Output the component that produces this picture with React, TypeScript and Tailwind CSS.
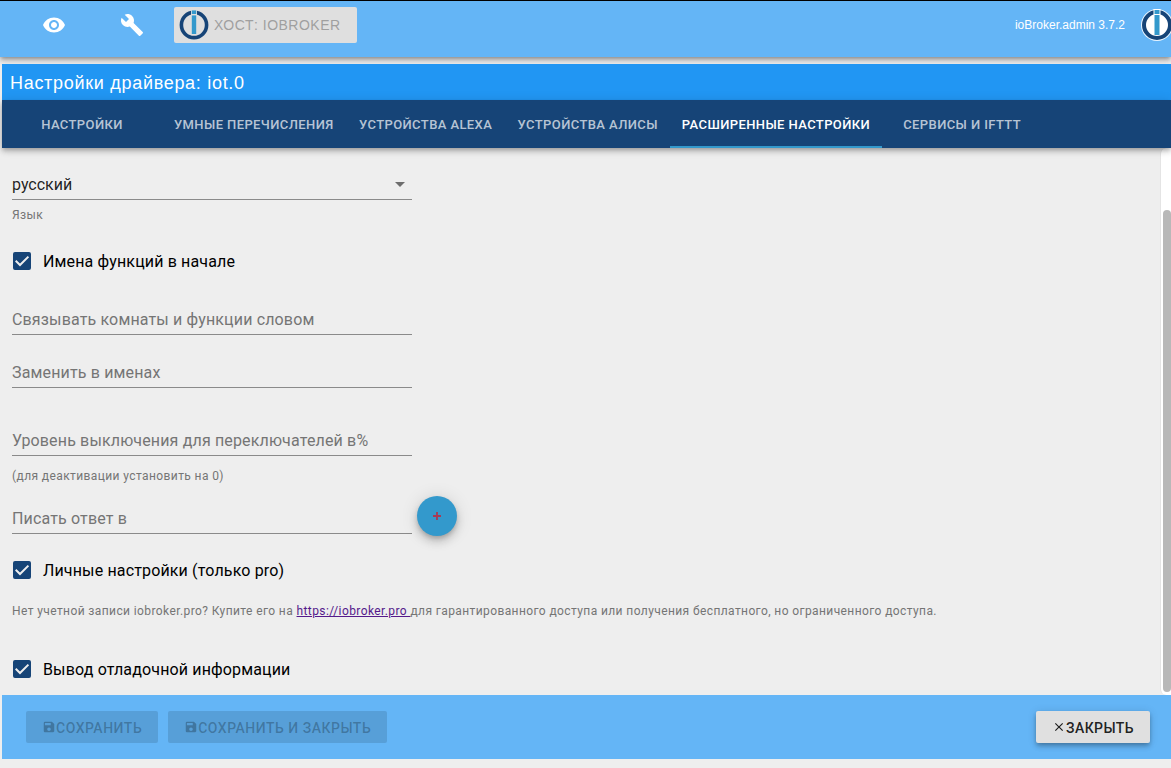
import { useState } from "react"
import { MdArrowDropDown, MdBuild, MdClose, MdSave, MdVisibility } from "react-icons/md"

const TABS = [
  "Настройки",
  "Умные перечисления",
  "Устройства Alexa",
  "Устройства Алисы",
  "Расширенные настройки",
  "Сервисы и IFTTT",
]

function Logo({ className }: { className?: string }) {
  return (
    <svg viewBox="0 0 32 32" className={className} aria-hidden="true">
      <circle cx="16" cy="16" r="16" fill="#fff" fillOpacity="0.85" />
      <circle cx="16" cy="16" r="13" fill="#fff" stroke="#164477" strokeWidth="4" />
      <rect x="12.5" y="0" width="7" height="7" fill="#fff" />
      <rect x="13.5" y="1" width="5" height="4" fill="#3399cc" />
      <rect x="13.5" y="6" width="5" height="20" fill="#3399cc" />
    </svg>
  )
}

function HostLogo({ className }: { className?: string }) {
  return (
    <svg viewBox="0 0 32 32" className={className} aria-hidden="true">
      <circle cx="16" cy="16" r="12.6" fill="none" stroke="#164477" strokeWidth="3.6" />
      <rect x="13" y="0" width="6" height="7" fill="#dfdfdf" />
      <rect x="13.8" y="1.4" width="4.4" height="3.6" fill="#3399cc" />
      <rect x="13.8" y="6.4" width="4.4" height="18.6" fill="#3399cc" />
    </svg>
  )
}

interface TextFieldProps {
  id: string
  label: string
  className?: string
}

// The label lies in the input's own grid cell and goes away once something is typed
function TextField({ id, label, className = "" }: TextFieldProps) {
  return (
    <div className={`grid w-[400px] ${className}`}>
      <input
        id={id}
        type="text"
        placeholder=" "
        className="peer col-start-1 row-start-1 h-8 w-full border-b border-[#8a8a8a] bg-transparent pt-0.5 text-base text-black/87 outline-none"
      />
      <label
        htmlFor={id}
        className="pointer-events-none col-start-1 row-start-1 pt-[5px] text-base leading-6 tracking-[0.15px] text-[#757575] peer-not-placeholder-shown:invisible"
      >
        {label}
      </label>
    </div>
  )
}

interface CheckFieldProps {
  id: string
  label: string
  className?: string
}

function CheckField({ id, label, className = "" }: CheckFieldProps) {
  const [checked, setChecked] = useState(true)

  return (
    <div className={`flex items-center gap-3 pl-px ${className}`}>
      <span className="grid size-[18px]">
        <input
          id={id}
          type="checkbox"
          checked={checked}
          onChange={(e) => setChecked(e.target.checked)}
          className="peer col-start-1 row-start-1 size-[18px] appearance-none rounded-xs border-2 border-[#164477] checked:bg-[#164477]"
        />
        <svg
          viewBox="0 0 18 18"
          className="pointer-events-none col-start-1 row-start-1 hidden size-[18px] peer-checked:block"
          aria-hidden="true"
        >
          <path d="M2.7 8.8 L7 13 L15.4 4.6" fill="none" stroke="#eee" strokeWidth="2" />
        </svg>
      </span>
      <label htmlFor={id} className="pt-0.5 text-base leading-[22px] tracking-[0.15px] text-black">{label}</label>
    </div>
  )
}

export default function App() {
  const [tab, setTab] = useState(4)
  const [language, setLanguage] = useState("ru")

  return (
    <div className="flex min-h-screen flex-col overflow-hidden bg-[#eee] pb-[9px] font-['Roboto',sans-serif]">
      {/* Admin toolbar */}
      <header className="flex items-center border-t border-black bg-[#64b5f6] pt-1.5 pb-3.5 font-['Liberation_Sans',sans-serif] shadow-[0_2px_4px_-1px_rgba(0,0,0,0.3),0_4px_5px_0_rgba(0,0,0,0.14),0_1px_10px_0_rgba(0,0,0,0.12)]">
        <button type="button" aria-label="Видимость" className="ml-[42px] text-white">
          <MdVisibility className="size-6" />
        </button>
        <button type="button" aria-label="Инструменты" className="ml-[54px] text-white">
          <MdBuild className="size-6" />
        </button>
        <button
          type="button"
          disabled
          className="ml-[30px] flex h-9 items-center gap-1 rounded-xs bg-[#dfdfdf] pr-4 pl-1 text-sm tracking-[0.5px] text-[#9f9f9f] uppercase"
        >
          <HostLogo className="size-8" />
          Хост: ioBroker
        </button>
        <span className="ml-auto text-xs text-white">ioBroker.admin 3.7.2</span>
        <Logo className="-mr-0.5 ml-4 size-8" />
      </header>

      {/* Adapter settings window */}
      <main className="relative mt-[7px] ml-0.5 flex grow flex-col">
        <h1 className="h-9 bg-[#2196f3] pl-2 font-['Liberation_Sans',sans-serif] text-lg leading-[38px] tracking-[0.7px] text-white">
          Настройки драйвера: iot.0
        </h1>
        <nav
          role="tablist"
          className="z-10 flex h-12 bg-[#164477] shadow-[0_2px_4px_-1px_rgba(0,0,0,0.2),0_4px_5px_0_rgba(0,0,0,0.14),0_1px_10px_0_rgba(0,0,0,0.12)]"
        >
          {TABS.map((name, i) => (
            <button
              key={name}
              type="button"
              role="tab"
              aria-selected={tab === i}
              onClick={() => setTab(i)}
              className={`min-w-40 border-b-2 px-3 pt-1 text-[13px] font-medium tracking-[0.4px] uppercase ${
                tab === i ? "border-[#3399cc] text-white" : "border-transparent text-white/70"
              }`}
            >
              {name}
            </button>
          ))}
        </nav>

        <div className="flex grow">
          <div className="grow pt-5 pb-3.5 pl-2.5">
            <div className="grid w-[400px] items-center">
              <select
                id="language"
                value={language}
                onChange={(e) => setLanguage(e.target.value)}
                className="col-start-1 row-start-1 h-8 appearance-none border-b border-[#8a8a8a] bg-transparent pt-0.5 text-base text-black/87 outline-none"
              >
                <option value="ru">русский</option>
                <option value="en">English</option>
                <option value="de">Deutsch</option>
              </select>
              <MdArrowDropDown className="pointer-events-none col-start-1 row-start-1 size-6 justify-self-end text-black/54" />
            </div>
            <label htmlFor="language" className="mt-[5px] block text-xs leading-5 tracking-[0.4px] text-[#757575]">
              Язык
            </label>

            <CheckField id="functions-first" label="Имена функций в начале" className="mt-6" />
            <TextField id="concat-word" label="Связывать комнаты и функции словом" className="mt-[30px]" />
            <TextField id="replaces" label="Заменить в именах" className="mt-[21px]" />
            <TextField id="off-level" label="Уровень выключения для переключателей в%" className="mt-9" />
            <p className="mt-2.5 text-xs leading-5 tracking-[0.4px] text-[#757575]">(для деактивации установить на 0)</p>

            <div className="mt-2.5 flex items-start gap-[5px]">
              <TextField id="response-oid" label="Писать ответ в" className="mt-1.5" />
              <button
                type="button"
                aria-label="Выбрать"
                className="flex size-10 items-center justify-center rounded-full bg-[#3399cc] shadow-[0_3px_5px_-1px_rgba(0,0,0,0.2),0_6px_10px_0_rgba(0,0,0,0.14),0_1px_18px_0_rgba(0,0,0,0.12)]"
              >
                <svg viewBox="0 0 8 8" className="size-2" aria-hidden="true">
                  <path d="M0 4 H8 M4 0 V8" stroke="#a83a55" strokeWidth="1.8" />
                </svg>
              </button>
            </div>

            <CheckField id="private-cloud" label="Личные настройки (только pro)" className="mt-[22px]" />
            <p className="mt-[19px] text-xs leading-5 tracking-[0.4px] text-[#757575]">
              Нет учетной записи iobroker.pro? Купите его на{" "}
              <a href="https://iobroker.pro" className="text-[#551a8b] underline">https://iobroker.pro </a>
              для гарантированного доступа или получения бесплатного, но ограниченного доступа.
            </p>
            <CheckField id="debug" label="Вывод отладочной информации" className="mt-9" />
          </div>

          {/* Scrollbar */}
          <div className="flex w-[11px] flex-col rounded-l-md border-l border-[#e4e4e4] bg-white pt-[62px] pb-[3px] pl-0.5">
            <div className="w-2 grow rounded-full bg-[#b8b8b8]" />
          </div>
        </div>

        <footer className="flex h-16 items-center bg-[#64b5f6] px-6 text-sm font-medium">
          <button
            type="button"
            disabled
            className="flex h-8 items-center rounded-xs bg-black/12 px-4 tracking-[0.5px] text-black/26 uppercase"
          >
            <MdSave className="size-3.5" />
            <span className="pt-0.5">Сохранить</span>
          </button>
          <button
            type="button"
            disabled
            className="ml-2.5 flex h-8 items-center rounded-xs bg-black/12 px-4 tracking-[0.5px] text-black/26 uppercase"
          >
            <MdSave className="size-3.5" />
            <span className="pt-0.5">Сохранить и закрыть</span>
          </button>
          <button
            type="button"
            className="mr-[-3px] ml-auto flex h-8 items-center rounded-xs bg-[#e0e0e0] px-4 tracking-[0.4px] text-black/87 uppercase shadow-[0_2px_4px_-1px_rgba(0,0,0,0.2),0_4px_5px_0_rgba(0,0,0,0.14),0_1px_10px_0_rgba(0,0,0,0.12)]"
          >
            <MdClose className="size-3.5" />
            <span className="pt-0.5">Закрыть</span>
          </button>
        </footer>
      </main>
    </div>
  )
}
